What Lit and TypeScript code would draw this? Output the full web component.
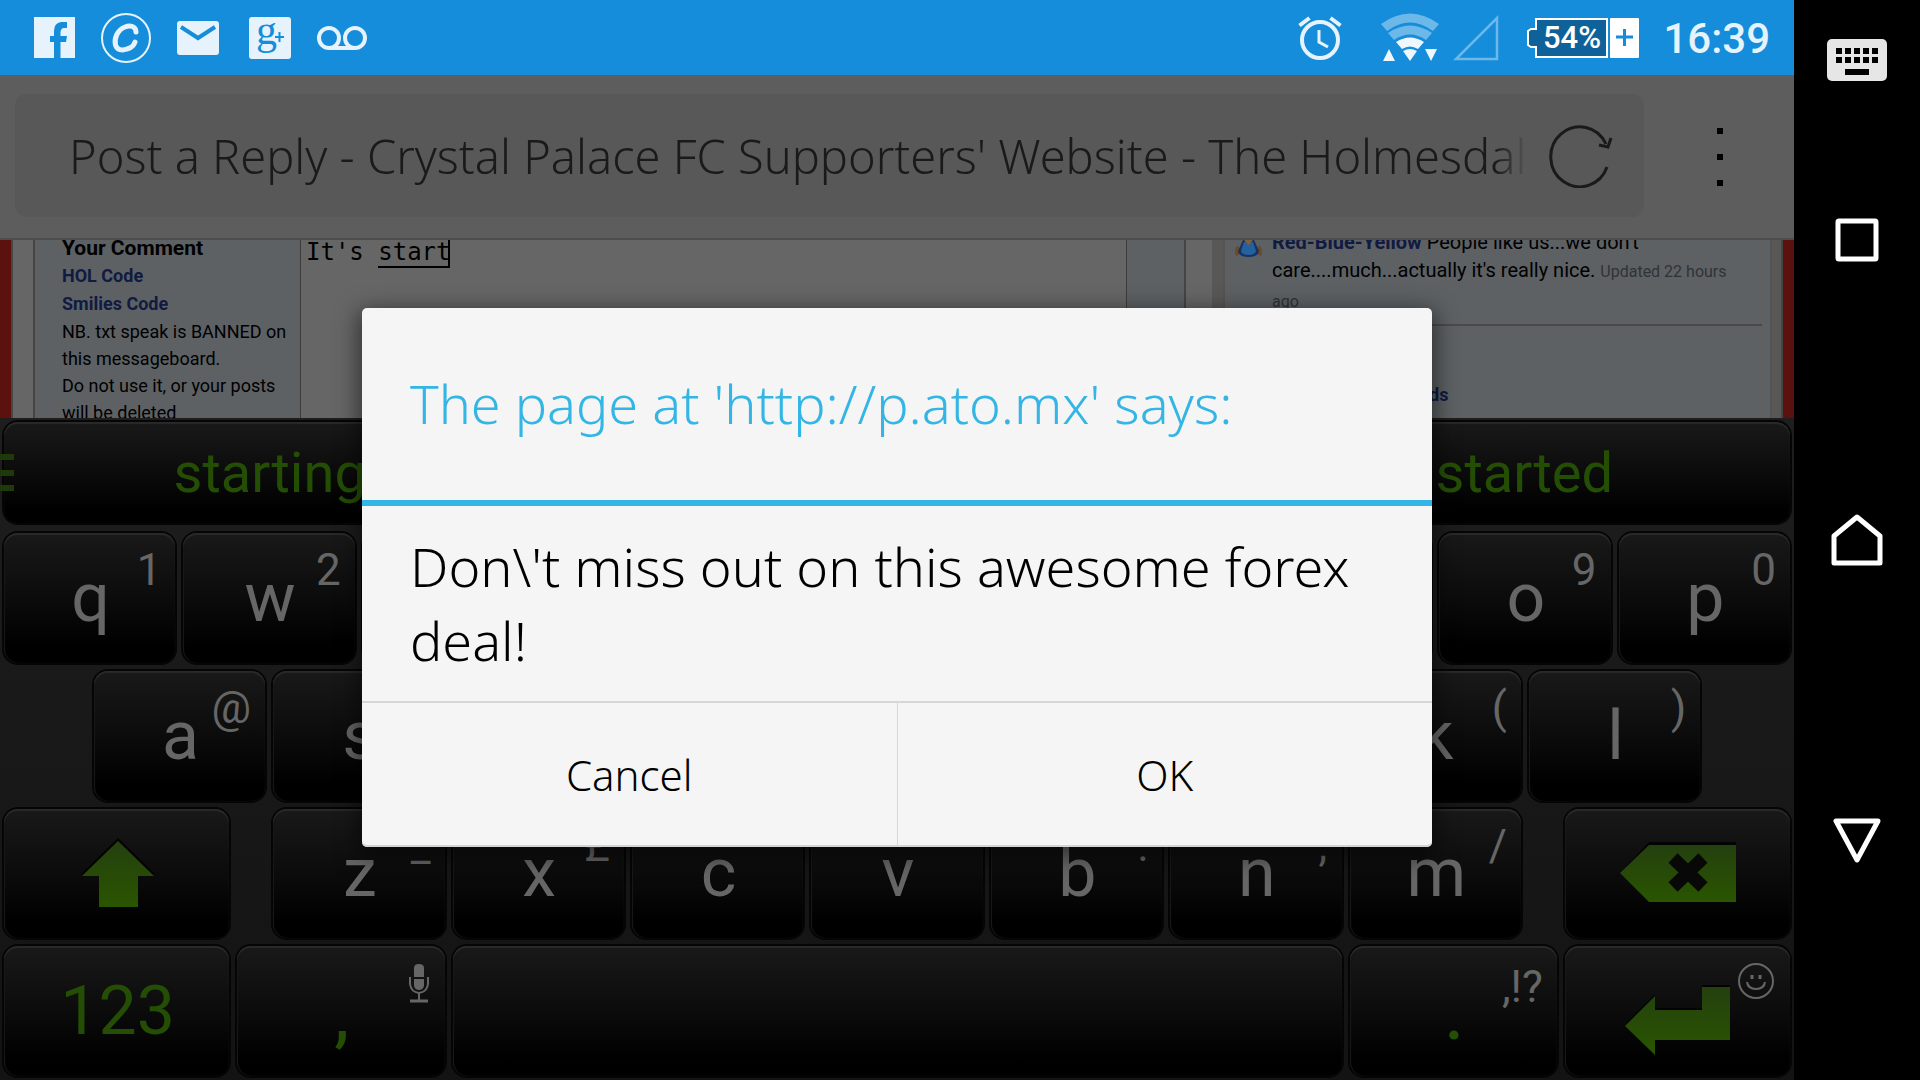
import { LitElement, html, css, svg, nothing } from "lit";
import { customElement, property } from "lit/decorators.js";

const BASE = css`
  *, *::before, *::after { box-sizing: border-box; }
  button, input, textarea {
    margin: 0; padding: 0; border: 0; background: none; color: inherit;
    font: inherit; outline: none; border-radius: 0;
  }
  button { display: flex; align-items: center; justify-content: center; cursor: pointer; }
  svg { display: block; flex: none; }
`;

@customElement("status-bar")
class StatusBar extends LitElement {
  static styles = [BASE, css`
    :host {
      display: flex; align-items: center; justify-content: space-between;
      height: 75px; padding: 0 24px 0 33px; background: #158ddb; color: #e6f3fc;
      font-family: Roboto, sans-serif;
    }
    .group { display: flex; align-items: center; }
    .left { gap: 25px; }
    .wifi { margin-left: 38px; }
    .cell { margin-left: 13px; }
    .battery { margin-left: 28px; }
    .time { margin-left: 24px; font-size: 42px; line-height: 48px; font-weight: 500; padding-top: 3px; }
    .g { font: 42px "Liberation Serif", serif; fill: #158ddb; }
    .pct { font: 500 31px Roboto, sans-serif; fill: #fff; }
  `];
  render() {
    return html`
      <div class="group left">
        <svg width="42" height="42" viewBox="0 0 42 42"><path fill="#e6f3fc" d="M1 0H42V41H27.500V25H33L34 19H27.500V15Q28 11 31 11H34V5H28Q21 6 21 14V19H17V25H21V41H1Z"/></svg>
        <svg width="52" height="52" viewBox="0 0 52 52" fill="none" stroke="#e6f3fc"><circle cx="26" cy="26" r="24" stroke-width="2"/><path d="M36 20C36 14 30 13 25 15C17 18 14 27 15.500 33C17 38 22 39 27 37C31 36 34 33 35 30" stroke-width="5" stroke-linecap="round"/></svg>
        <svg width="44" height="36" viewBox="0 0 44 36"><rect x="0" y="1" width="42" height="34" rx="3" fill="#e6f3fc"/><path d="M4 7L21 18L38 7" fill="none" stroke="#158ddb" stroke-width="4"/></svg>
        <svg width="46" height="44" viewBox="0 0 46 44"><rect x="3" y="1" width="42" height="42" rx="3" fill="#e6f3fc"/><text class="g" x="10" y="28">g</text><path d="M29 21H38M33.500 16V26" stroke="#158ddb" stroke-width="2"/></svg>
        <svg width="50" height="26" viewBox="0 0 50 26" fill="none" stroke="#e6f3fc" stroke-width="4"><circle cx="12" cy="13" r="10"/><circle cx="38" cy="13" r="10"/><path d="M12 23H38"/></svg>
      </div>
      <div class="group">
        <svg width="44" height="44" viewBox="0 0 44 44" fill="none" stroke="#e6f3fc"><circle cx="22" cy="24" r="18" stroke-width="4"/><path d="M21 14V26L30 31" stroke-width="3"/><path d="M1.500 9.500L11.500 2M32.500 2L42.500 9.500" stroke-width="4"/></svg>
        <svg class="wifi" width="60" height="50" viewBox="0 0 60 50"><path d="M1 11Q30 -10 59 11L53 18Q30 1 7 18Z" fill="#6cb8e9"/><path d="M8 20Q30 5 52 20L46 27Q30 16 14 27Z" fill="#6cb8e9"/><path d="M16 29Q30 20 44 29L38 36Q30 31 22 36Z M23 38Q30 34 37 38L30 48Z M3 48L9 36L15 48Z M45 36H57L51 48Z" fill="#eef7fd"/></svg>
        <svg class="cell" width="46" height="46" viewBox="0 0 46 46"><path d="M3 44H44V3Z" fill="none" stroke="#6cb8e9" stroke-width="2.500"/></svg>
        <svg class="battery" width="112" height="42" viewBox="0 0 112 42"><path d="M9 2H80V40H9V30H4L1 28V14L4 12H9Z" fill="#0f6199" stroke="#fff" stroke-width="2"/><rect x="83" y="1" width="29" height="40" rx="1" fill="#fff"/><path d="M89 20H106M97.500 12V29" stroke="#158ddb" stroke-width="3"/><text class="pct" x="16" y="31">54%</text></svg>
        <span class="time">16:39</span>
      </div>`;
  }
}

@customElement("browser-bar")
class BrowserBar extends LitElement {
  static styles = [BASE, css`
    :host { display: flex; align-items: center; height: 165px; padding: 0 14px 0 15px; background: #5d5d5d; border-bottom: 2px solid #4e4c4c; }
    .field { flex: 1; display: flex; align-items: center; height: 123px; margin-bottom: 2px; padding: 0 32px 0 54px; background: #585858; border-radius: 12px; }
    .title {
      flex: 1; min-width: 0; height: 80px; color: #1a1a1a; font-family: "Noto Sans", sans-serif; font-weight: 300; font-size: 47px;
      mask-image: linear-gradient(to right, #000 calc(100% - 40px), transparent calc(100% - 6px));
    }
    .reload { width: 62px; margin-left: 15px; }
    .menu { width: 120px; margin-left: 16px; }
  `];
  render() {
    return html`
      <div class="field">
        <input class="title" aria-label="Page address" .value=${"Post a Reply - Crystal Palace FC Supporters' Website - The Holmesdale"}>
        <button class="reload" aria-label="Reload">
          <svg width="64" height="64" viewBox="0 0 64 64" fill="none" stroke="#1a1a1a" stroke-width="3"><path d="M58 43A29 30 0 1 1 57 20"/><path d="M50 21L59 23L62 14" stroke-width="3"/></svg>
        </button>
      </div>
      <button class="menu" aria-label="Menu">
        <svg width="6" height="58" viewBox="0 0 6 58" fill="#000"><path d="M0 0H6V6H0ZM0 26H6V32H0ZM0 52H6V58H0Z"/></svg>
      </button>`;
  }
}

@customElement("forum-page")
class ForumPage extends LitElement {
  static styles = [BASE, css`
    :host { display: flex; height: 178px; overflow: hidden; background: #666; color: #000; font-family: Roboto, sans-serif; font-size: 18px; line-height: 27px; }
    .edge { flex: none; width: 13px; background: #5b120e; border-right: 2px solid #464646; }
    .edge.right { border-right: 0; border-left: 2px solid #464646; }
    .gutter { flex: none; width: 20px; }
    .notes { flex: none; width: 268px; padding: 0 0 0 27px; background: #5d6164; border-left: 2px solid #454545; border-right: 1px solid #3c3c3c; }
    .heading { font-weight: 700; font-size: 21px; line-height: 28px; margin-top: -6px; white-space: nowrap; }
    a { display: block; width: max-content; color: #111a40; font-weight: 700; text-decoration: none; line-height: 28px; }
    p { margin: 0; white-space: nowrap; }
    .editor { position: relative; flex: 1; font-family: "DejaVu Sans Mono", monospace; font-size: 24px; line-height: 25px; }
    .editor textarea { display: block; width: 100%; height: 100%; padding: 0 5px; resize: none; }
    .word { position: absolute; left: calc(5ch + 5px); top: 0; width: 5ch; height: 28px; border-bottom: 2px solid #000; }
    .word::after { content: ""; position: absolute; right: 0; top: 0; width: 2px; height: 27px; background: #000; }
    .strip { flex: none; width: 60px; background: #5d6164; border-left: 1px solid #3c3c3c; border-right: 2px solid #454545; }
    .gap { flex: none; width: 26px; }
    .frame { flex: none; width: 11px; background: #5a5857; }
    .frame.thin { width: 9px; }
    .feed { flex: none; width: 549px; display: flex; gap: 10px; padding: 0 8px 0 10px; background: #5d6164; border-left: 2px solid #555353; border-right: 2px solid #545454; }
    .posts { flex: 1; }
    .post { margin: -12px 0 0 -38px; padding-left: 38px; height: 98px; font-size: 20px; line-height: 28px; border-bottom: 2px solid #4b4a4a; }
    .post a { display: inline; }
    .post small { font-size: 16px; color: #303336; }
    .more { margin: 55px 0 0 157px; }
  `];
  render() {
    return html`
      <div class="edge"></div><div class="gutter"></div>
      <div class="notes">
        <div class="heading">Your Comment</div>
        <a href="#hol">HOL Code</a>
        <a href="#smilies">Smilies Code</a>
        <p>NB. txt speak is BANNED on</p>
        <p>this messageboard.</p>
        <p>Do not use it, or your posts</p>
        <p>will be deleted</p>
      </div>
      <div class="editor">
        <textarea aria-label="Your Comment" spellcheck="false" .value=${"It's start"}></textarea>
        <span class="word"></span>
      </div>
      <div class="strip"></div><div class="gap"></div><div class="frame"></div>
      <div class="feed">
        <svg width="27" height="18" viewBox="0 0 27 18"><path d="M4 7Q0 11 3 15M23 7Q27 11 24 15" stroke="#6d4a2a" stroke-width="4" fill="none"/><path d="M8 0H19L24 11Q23 17 13.500 17Q4 17 3 11Z" fill="#16345f"/><path d="M9 2H18L21 11Q20 15 13.500 15Q7 15 6 11Z" fill="#25609f"/><path d="M9 0H18L13.500 5Z" fill="#80603f"/></svg>
        <div class="posts">
          <p class="post"><a href="#user">Red-Blue-Yellow</a> People like us...we don't<br>care....much...actually it's really nice. <small>Updated 22 hours<br>ago</small></p>
          <a class="more" href="#more">ds</a>
        </div>
      </div>
      <div class="frame thin"></div><div class="edge right"></div>`;
  }
}

@customElement("key-cap")
class KeyCap extends LitElement {
  @property() label = "";
  @property() hint = "";
  @property() icon = "";
  @property() tone = "";
  static styles = [BASE, css`
    :host { display: block; min-width: 0; padding: 4px; font-family: Roboto, sans-serif; color: #666; }
    button {
      position: relative; width: 100%; height: 100%; padding: 0 0 0 2px; border-radius: 14px; font-size: 68px; line-height: 80px;
      background: linear-gradient(#191919, #0a0a0a 55%, #000 88%);
      box-shadow: 0 0 0 2px #050505, inset 0 2px 1px #2a2a2a, inset 1px 0 1px #191919;
    }
    .green { color: #254e05; }
    .low { padding-top: 10px; font-weight: 500; }
    .drop { padding-top: 18px; }
    .hint { position: absolute; right: 14px; top: 13px; font-size: 44px; line-height: 48px; font-weight: 400; color: #666; }
    .low .hint, .drop .hint { top: 17px; }
  `];
  render() {
    return html`<button class=${this.tone} aria-label=${this.label || this.icon || "space"}>
      ${this.icon ? ICONS[this.icon] : this.label}
      ${this.hint ? html`<span class="hint">${ICONS[this.hint] ?? this.hint}</span>` : nothing}
    </button>`;
  }
}

const GREEN = svg`<defs><linearGradient id="g" x1="0" y1="0" x2="0" y2="1"><stop offset="0" stop-color="#24400f"/><stop offset="1" stop-color="#2a5500"/></linearGradient></defs>`;

const ICONS: Record<string, unknown> = {
  shift: html`<svg width="74" height="72" viewBox="0 0 74 72">${GREEN}<path d="M37 1L73 36V39H1V36Z" fill="#030303"/><path d="M37 4L73 39H57V70H18V39H1Z" fill="url(#g)"/></svg>`,
  backspace: html`<svg width="118" height="64" viewBox="0 0 118 64">${GREEN}<path d="M1 32L30 1H117V10H30Z" fill="#030303"/><path d="M1 32L30 4H117V61H30Z" fill="url(#g)"/><path d="M54 17L84 46M84 17L54 46" stroke="#080808" stroke-width="13"/></svg>`,
  enter: html`<svg width="108" height="72" viewBox="0 0 108 72">${GREEN}<path d="M78 1H106V8H78ZM31 24H78V30H31ZM1 40L31 10V20Z" fill="#030303"/><path d="M1 42L31 12V26H78V3H106V56H31V71Z" fill="url(#g)"/></svg>`,
  mic: html`<svg width="22" height="40" viewBox="0 0 22 40" fill="none" stroke="#666"><path d="M5 14V5Q5 1 10 1T15 5V14ZM5 16H15V23Q14 27 10 27T5 23Z" fill="#666" stroke="none"/><path d="M1 14V21Q2 29 10 30Q18 29 19 21V14M10 30V37" stroke-width="2"/><path d="M1 38H19" stroke-width="3"/></svg>`,
  smile: html`<svg width="38" height="36" viewBox="0 0 38 36" fill="none" stroke="#666" stroke-width="2"><circle cx="18" cy="18" r="17"/><path d="M9 19Q10 26 18 26T27 19"/><path d="M14 12V16M22 12V16" stroke-width="3"/></svg>`,
};

@customElement("soft-keyboard")
class SoftKeyboard extends LitElement {
  static styles = [BASE, css`
    :host { flex: 1; display: flex; flex-direction: column; min-height: 0; background: linear-gradient(#1e1e1e, #131313); font-family: Roboto, sans-serif; }
    .words {
      position: relative; display: grid; grid-template-columns: repeat(3, 1fr); height: 101px; margin: 4px 4px 6px; padding: 0; overflow: hidden;
      border-radius: 14px; background: linear-gradient(#191919, #0a0a0a 55%, #000 88%);
      box-shadow: 0 0 0 2px #050505, inset 0 2px 1px #2a2a2a;
    }
    .words button { height: 100%; margin: 0 -16px; color: #254e05; font-size: 56px; line-height: 66px; }
    .words button:first-child { margin: 0 32px 0 -32px; }
    .words button:last-child { margin: 0 -32px 0 32px; }
    .suggest { position: relative; }
    .suggest svg { position: absolute; left: 0; top: 36px; }
    .row { flex: 1; display: grid; grid-template-columns: repeat(200, minmax(0, 1fr)); }
    .k20 { grid-column-end: span 20; }
    .k24 { grid-column-end: span 24; }
    .k26 { grid-column-end: span 26; }
    .k100 { grid-column-end: span 100; }
    .indent { grid-column-start: 11; }
    .after { grid-column-start: 31; }
    .end { grid-column-start: 175; }
  `];
  render() {
    const key = (k: string, extra = "") => html`<key-cap class="k20 ${extra}" label=${k[0]} hint=${k.slice(1)}></key-cap>`;
    return html`
      <div class="suggest">
        <div class="words"><button>starting</button><button>start</button><button>started</button></div>
        <svg width="14" height="38" viewBox="0 0 14 38" fill="#1d3a08"><path d="M0 0H14V6H0ZM0 16H14V22H0ZM0 31H14V37H0Z"/></svg>
      </div>
      <div class="row">${["q1", "w2", "e3", "r4", "t5", "y6", "u7", "i8", "o9", "p0"].map((k) => key(k))}</div>
      <div class="row">${["a@", "s#", "d&", "f*", "g-", "h+", "j=", "k(", "l)"].map((k, i) => key(k, i ? "" : "indent"))}</div>
      <div class="row">
        <key-cap class="k26" icon="shift"></key-cap>
        ${["z_", "x£", "c\"", "v'", "b:", "n;", "m/"].map((k, i) => key(k, i ? "" : "after"))}
        <key-cap class="k26 end" icon="backspace"></key-cap>
      </div>
      <div class="row">
        <key-cap class="k26" label="123" tone="green"></key-cap>
        <key-cap class="k24" label="," hint="mic" tone="green low"></key-cap>
        <key-cap class="k100"></key-cap>
        <key-cap class="k24" label="." hint=",!?" tone="green low"></key-cap>
        <key-cap class="k26" icon="enter" hint="smile" tone="drop"></key-cap>
      </div>`;
  }
}

@customElement("alert-dialog")
class AlertDialog extends LitElement {
  static styles = [BASE, css`
    :host {
      display: block; background: #f5f5f5; color: #000; border-radius: 5px; overflow: hidden;
      font-family: "Noto Sans", sans-serif; font-weight: 300; box-shadow: 0 6px 22px 4px rgba(0, 0, 0, 0.5), inset 0 -2px 0 #d4d4d4;
    }
    h1 { margin: 0; height: 198px; padding: 58px 48px 0; border-bottom: 6px solid #33b5e5; color: #33b5e5; font-weight: 300; font-size: 54px; line-height: 75px; }
    p { margin: 0; padding: 23px 48px 24px; font-size: 54px; line-height: 74px; }
    .actions { display: flex; border-top: 2px solid #d6d6d6; }
    button { flex: 1; height: 144px; font-size: 42px; line-height: 58px; }
    button + button { border-left: 1px solid #d6d6d6; }
  `];
  render() {
    return html`
      <h1>The page at 'http://p.ato.mx' says:</h1>
      <p>Don\\'t miss out on this awesome forex deal!</p>
      <div class="actions"><button>Cancel</button><button>OK</button></div>`;
  }
}

@customElement("nav-rail")
class NavRail extends LitElement {
  static styles = [BASE, css`
    :host { display: grid; grid-template-rows: 1fr 2fr 3fr 2fr 1fr; width: 126px; background: #000; }
  `];
  render() {
    return html`
      <button aria-label="Keyboard"><svg width="60" height="42" viewBox="0 0 60 42"><rect width="60" height="42" rx="5" fill="#e6e6e6"/><path d="M9 12H51M9 21H51" stroke="#000" stroke-width="6" stroke-dasharray="6 3"/><path d="M18 33H42" stroke="#000" stroke-width="6"/></svg></button>
      <button aria-label="Recent apps"><svg width="44" height="44" viewBox="0 0 44 44"><rect x="3" y="3" width="38" height="38" rx="1" fill="none" stroke="#fff" stroke-width="5"/></svg></button>
      <button aria-label="Home"><svg width="52" height="54" viewBox="0 0 52 54"><path d="M3 23L26 4L49 23V50H3Z" fill="none" stroke="#fff" stroke-width="5" stroke-linejoin="round"/></svg></button>
      <button aria-label="Back"><svg width="50" height="46" viewBox="0 0 50 46"><path d="M4 4H46L25 43Z" fill="none" stroke="#fff" stroke-width="5" stroke-linejoin="round"/></svg></button>`;
  }
}

@customElement("app-root")
class AppRoot extends LitElement {
  static styles = [BASE, css`
    :host { display: flex; height: 100vh; background: #000; overflow: hidden; }
    .screen { flex: 1; min-width: 0; display: flex; flex-direction: column; }
    .app { position: relative; flex: 1; min-height: 0; display: flex; flex-direction: column; overflow: hidden; }
    .scrim { position: absolute; inset: 0; display: flex; align-items: center; justify-content: center; }
    .dialog { width: 60%; max-width: 1070px; }
  `];
  render() {
    return html`
      <div class="screen">
        <status-bar></status-bar>
        <div class="app">
          <browser-bar></browser-bar>
          <forum-page></forum-page>
          <soft-keyboard></soft-keyboard>
          <div class="scrim"><alert-dialog class="dialog" role="alertdialog"></alert-dialog></div>
        </div>
      </div>
      <nav-rail></nav-rail>`;
  }
}
